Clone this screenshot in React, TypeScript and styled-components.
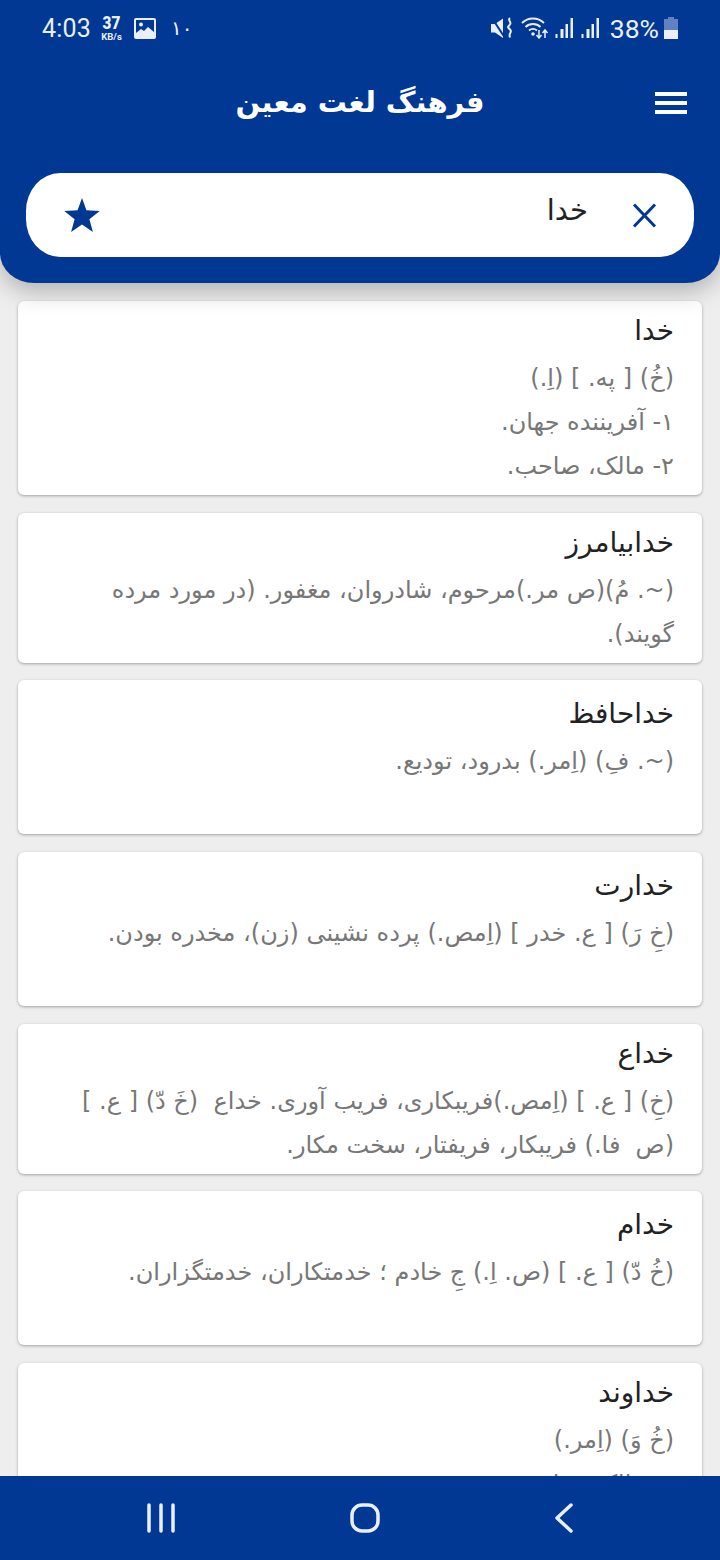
import React from "react";
import styled, { createGlobalStyle } from "styled-components";

const Global = createGlobalStyle`
  html, body { margin: 0; padding: 0; background: #eeeeee; }
  * { box-sizing: border-box; }
`;
const Blue = "#013893";
const Fa = `"DejaVu Sans", "Noto Sans", sans-serif`;

const Page = styled.div`
  width: 720px; height: 1560px; display: flex; flex-direction: column; overflow: hidden; background: #eeeeee;
`;
const Header = styled.header`
  position: relative; z-index: 2; flex: 0 0 283px; height: 283px; background: ${Blue};
  border-radius: 0 0 34px 34px / 0 0 30px 30px;
  box-shadow: 0 8px 24px rgba(0,0,0,.26);
  display: flex; flex-direction: column;
`;
const StatusBar = styled.div`
  height: 56px; padding: 0 42px; display: flex; justify-content: space-between; align-items: center;
  color: #eaf0fb; font-family: Roboto, sans-serif;
`;
const StatusGroup = styled.div`display: flex; align-items: center;`;
const Clock = styled.span`font-size: 25px; letter-spacing: .2px; margin-right: 7px;`;
const Speed = styled.span`
  display: flex; flex-direction: column; align-items: center; font-weight: 700; margin: -2px 9px 0 0; width: 27px;
  b { font-size: 18px; line-height: 19px; transform: scaleX(.85); }
  i { font-style: normal; font-size: 9.500px; line-height: 9px; white-space: nowrap; }
`;
const Notif = styled.span`font-size: 20px; margin-left: 15px; font-family: ${Fa};`;
const Battery = styled.span`font-size: 26.500px; margin: 0 5px 0 10px;`;
const StatusIcon = styled.svg<{ $gap?: number }>`
  display: block; margin-right: ${(p) => p.$gap ?? 0}px;
`;
const TitleBar = styled.div`
  height: 92px; position: relative; display: flex; align-items: center; justify-content: center;
`;
const AppTitle = styled.h1`
  margin: 0; color: #fff; font: 700 29px ${Fa}; direction: rtl;
`;
const Menu = styled.button`
  position: absolute; right: 33px; top: 36px; width: 32px; height: 22px; padding: 0; border: 0; background: none;
  display: flex; flex-direction: column; justify-content: space-between;
  span { display: block; height: 4px; background: #fff; }
`;
const SearchBox = styled.div`
  margin: 25px 26px 0; height: 84px; background: #fff; border-radius: 34px / 38px;
  display: flex; align-items: center; justify-content: space-between; padding: 0 37px 0 38px;
`;
const SearchRight = styled.div`display: flex; align-items: center; gap: 44px;`;
const Query = styled.span`
  font: 400 29px ${Fa}; color: #222; direction: rtl; position: relative; top: -5px;
`;
const List = styled.main`
  flex: 1; min-height: 0; overflow: hidden; padding: 18px 18px 0; display: flex; flex-direction: column; gap: 17.700px;
`;
const Card = styled.article<{ $single?: boolean }>`
  flex: none; background: #fff; border-radius: 6px; box-shadow: 0 1px 3px rgba(0,0,0,.32);
  direction: rtl; padding: ${(p) => (p.$single ? "14px 28px 51px 18px" : "10px 28px 7px 18px")};
`;
const Word = styled.h2`
  margin: 0 0 5px; font: 400 28px/40px ${Fa}; color: #222;
`;
const Line = styled.div`
  font: 400 24px/44px ${Fa}; color: #777; white-space: pre;
`;
const NavBar = styled.nav`
  position: relative; z-index: 2; flex: 0 0 84px; background: ${Blue}; display: flex; align-items: center;
  justify-content: space-between; padding: 0 146px;
`;

const data: { w: string; l: string[]; s?: boolean }[] = [
  { w: "خدا", l: ["(خُ) [ په. ] (اِ.)", "۱- آفریننده جهان.", "۲- مالک، صاحب."] },
  { w: "خدابیامرز", l: ["(~. مُ)(ص مر.)مرحوم، شادروان، مغفور. (در مورد مرده", "گویند)."] },
  { w: "خداحافظ", l: ["(~. فِ) (اِمر.) بدرود، تودیع."], s: true },
  { w: "خدارت", l: ["(خِ رَ) [ ع. خدر ] (اِمص.) پرده نشینی (زن)، مخدره بودن."], s: true },
  { w: "خداع", l: ["(خِ) [ ع. ] (اِمص.)فریبکاری، فریب آوری. خداع  (خَ دّ) [ ع. ]", "(ص  فا.) فریبکار، فریفتار، سخت مکار."] },
  { w: "خدام", l: ["(خُ دّ) [ ع. ] (ص. اِ.) جِ خادم ؛ خدمتکاران، خدمتگزاران."], s: true },
  { w: "خداوند", l: ["(خُ وَ) (اِمر.)", "۱- مالک، صاحب."] },
];

export default function App() {
  return (
    <Page>
      <Global />
      <Header>
        <StatusBar>
          <StatusGroup>
            <Clock>4:03</Clock>
            <Speed><b>37</b><i>KB/s</i></Speed>
            <StatusIcon as="svg" width="22" height="21" viewBox="0 0 22 21">
              <rect width="22" height="21" rx="2" fill="#eaf0fb" />
              <rect x="2" y="2" width="18" height="13" fill={Blue} />
              <circle cx="7" cy="6.500" r="2" fill="#eaf0fb" />
              <path d="M2 15l5-4 3 2 4-4 6 5v3H2z" fill="#eaf0fb" />
            </StatusIcon>
            <Notif>۱۰</Notif>
          </StatusGroup>
          <StatusGroup>
            <StatusIcon as="svg" $gap={8} width="22" height="22" viewBox="0 0 22 22">
              <path d="M0 7h4l8-5.500V21l-8-5.500H0z" fill="#eaf0fb" />
              <path d="M1 1l13 20" stroke={Blue} strokeWidth="2" />
              <path d="M19 1c-3 2 2 4 0 6.500s-3 2 0 5-2 3 0 8" fill="none" stroke="#eaf0fb" strokeWidth="2" />
            </StatusIcon>
            <StatusIcon as="svg" $gap={6} width="28" height="22" viewBox="0 0 28 22">
              <g fill="none" stroke="#eaf0fb" strokeWidth="1.800">
                <path d="M1 6c6-6 16-6 22 0" />
                <path d="M4.500 10c4-4 11-4 15 0" />
                <path d="M8 13.500c2.500-2 5.500-2 8 0" />
              </g>
              <circle cx="12" cy="17" r="1.800" fill="#eaf0fb" />
              <path d="M18 13v7M15.500 18l2.500 3 2.500-3M24 21v-7M21.500 16l2.500-3 2.500 3" fill="none" stroke="#eaf0fb" strokeWidth="1.500" />
            </StatusIcon>
            <StatusIcon as="svg" $gap={7} width="19" height="20" viewBox="0 0 18 20">
              <path d="M0 16h2v4H0zM5 11h3v9H5zM10 6h2.500v14H10zM15 0h2.500v20H15z" fill="#eaf0fb" />
            </StatusIcon>
            <StatusIcon as="svg" width="19" height="20" viewBox="0 0 18 20">
              <path d="M0 16h2v4H0zM5 11h3v9H5zM10 6h2.500v14H10zM15 0h2.500v20H15z" fill="#eaf0fb" />
            </StatusIcon>
            <Battery>38%</Battery>
            <StatusIcon as="svg" width="14" height="22" viewBox="0 0 14 22">
              <path d="M4 0h6v2h4v20H0V2h4z" fill="#5f82c0" />
              <path d="M0 13h14v9H0z" fill="#eaf0fb" />
            </StatusIcon>
          </StatusGroup>
        </StatusBar>
        <TitleBar>
          <AppTitle>فرهنگ لغت معین</AppTitle>
          <Menu aria-label="menu"><span /><span /><span /></Menu>
        </TitleBar>
        <SearchBox>
          <svg width="36" height="34" viewBox="0 0 24 23">
            <path d="M12 0l3 8.300 9 .5-7 5.600 2.400 8.600L12 18l-7.400 5L7 14.400 0 8.800l9-.5z" fill={Blue} />
          </svg>
          <SearchRight>
            <Query>خدا</Query>
            <svg width="25" height="25" viewBox="0 0 25 25">
              <path d="M2 1.500l21 22M23 1.500l-21 22" stroke={Blue} strokeWidth="3" fill="none" />
            </svg>
          </SearchRight>
        </SearchBox>
      </Header>
      <List>
        {data.map((d) => (
          <Card key={d.w} $single={d.s}>
            <Word>{d.w}</Word>
            {d.l.map((t) => <Line key={t}>{t}</Line>)}
          </Card>
        ))}
      </List>
      <NavBar>
        <svg width="30" height="30" viewBox="0 0 30 30">
          <path d="M3 2v26M15 2v26M27 2v26" stroke="#eaf0fb" strokeWidth="3.500" strokeLinecap="round" />
        </svg>
        <svg width="32" height="32" viewBox="0 0 32 32">
          <rect x="3" y="3" width="26" height="26" rx="10" fill="none" stroke="#eaf0fb" strokeWidth="3.500" />
        </svg>
        <svg width="20" height="32" viewBox="0 0 20 32">
          <path d="M17 3L3 16l14 13" fill="none" stroke="#eaf0fb" strokeWidth="3.500" strokeLinecap="round" strokeLinejoin="round" />
        </svg>
      </NavBar>
    </Page>
  );
}
